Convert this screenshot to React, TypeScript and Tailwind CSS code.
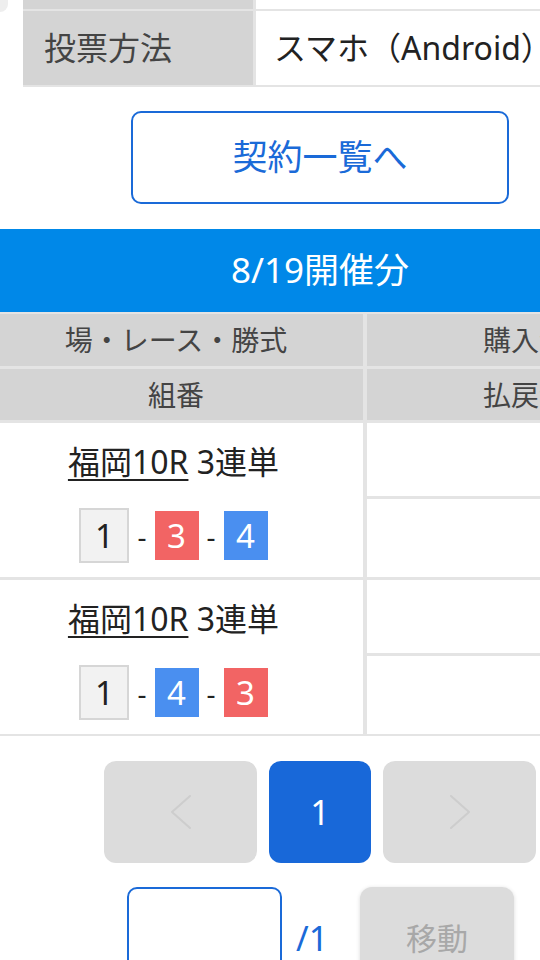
const FONT = { fontFamily: '"Noto Sans", "Noto Sans CJK JP", sans-serif' };

type Bet = { place: string; kind: string; nums: number[] };

const BETS: Bet[] = [
  { place: '福岡10R', kind: '3連単', nums: [1, 3, 4] },
  { place: '福岡10R', kind: '3連単', nums: [1, 4, 3] },
];

function Chevron({ dir }: { dir: 'left' | 'right' }) {
  const pts = dir === 'left' ? '20,1 2,17 20,33' : '2,1 20,17 2,33';
  return (
    <svg width="22" height="34" viewBox="0 0 22 34" fill="none">
      <polyline points={pts} stroke="#cdcdcd" strokeWidth="2" strokeLinecap="round" strokeLinejoin="round" />
    </svg>
  );
}

function NumBox({ n }: { n: number }) {
  if (n === 1) {
    return (
      <div className="w-[50px] h-[55px] border-2 border-[#d6d6d6] bg-[#f2f2f2] text-[#222] text-[33px] flex items-center justify-center">
        {n}
      </div>
    );
  }
  const bg = n === 3 ? 'bg-[#f26464]' : 'bg-[#4a8ff0]';
  return (
    <div className={`w-[44px] h-[49px] ${bg} text-white text-[33px] flex items-center justify-center`}>
      {n}
    </div>
  );
}

function BetRow({ bet }: { bet: Bet }) {
  return (
    <div className="flex gap-x-[4px] h-[154px]">
      <div className="w-[363px] bg-white flex flex-col items-center pr-[16px] pt-[19px] text-[#222]">
        <div className="text-[32px] leading-[40px]">
          <span className="underline decoration-2 underline-offset-[5px]">{bet.place}</span> {bet.kind}
        </div>
        <div className="mt-[26px] flex items-center">
          {bet.nums.map((n, i) => (
            <div key={i} className="flex items-center">
              {i > 0 && <span className="text-[28px] mx-[8px]">-</span>}
              <NumBox n={n} />
            </div>
          ))}
        </div>
      </div>
      <div className="w-[350px] flex flex-col gap-y-[3px]">
        <div className="h-[73px] bg-white" />
        <div className="flex-1 bg-white" />
      </div>
    </div>
  );
}

export default function App() {
  return (
    <div className="relative w-[540px] h-[960px] overflow-hidden bg-white" style={FONT}>
      <div className="absolute left-0 top-0 w-[8px] h-[12px] rounded-br-[8px] bg-[#eeeeee]" />
      <div className="w-[640px]">
        {/* summary table */}
        <div className="ml-[23px] w-[594px] bg-[#e4e4e4] flex flex-col gap-y-[2px] pb-[2px]">
          <div className="flex gap-x-[3px] h-[9px]">
            <div className="w-[230px] bg-[#d4d4d4]" />
            <div className="flex-1 bg-white" />
          </div>
          <div className="flex gap-x-[3px] h-[74px]">
            <div className="w-[230px] bg-[#d4d4d4] flex items-center pl-[21px] text-[32px] text-[#444]">投票方法</div>
            <div className="flex-1 bg-white flex items-center pl-[18px] text-[32px] text-[#222]">スマホ（Android）</div>
          </div>
        </div>

        <button className="mt-[24px] mx-auto flex items-center justify-center w-[378px] h-[93px] border-2 border-[#1a6ad8] rounded-[10px] text-[35px] text-[#1a6ad8]">
          契約一覧へ
        </button>

        <div className="mt-[25px] h-[83px] bg-[#0088e8] text-white text-[35px] flex items-center justify-center">
          8/19開催分
        </div>

        {/* bets table */}
        <div className="w-[717px] bg-[#e4e4e4] flex flex-col gap-y-[3px] pt-[2px] pb-[2px]">
          <div className="flex gap-x-[4px] h-[52px] text-[28px] text-[#444]">
            <div className="w-[363px] bg-[#d4d4d4] flex items-center justify-center pr-[11px]">場・レース・勝式</div>
            <div className="w-[350px] bg-[#d4d4d4] flex items-center justify-center pr-[6px]">購入金額</div>
          </div>
          <div className="flex gap-x-[4px] h-[51px] text-[28px] text-[#444]">
            <div className="w-[363px] bg-[#d4d4d4] flex items-center justify-center pr-[11px]">組番</div>
            <div className="w-[350px] bg-[#d4d4d4] flex items-center justify-center pr-[6px]">払戻金額</div>
          </div>
          {BETS.map((b, i) => (
            <BetRow key={i} bet={b} />
          ))}
        </div>

        {/* pagination */}
        <div className="mt-[25px] flex justify-center gap-x-[12px]">
          <div className="w-[153px] h-[102px] rounded-[12px] bg-[#dcdcdc] flex items-center justify-center">
            <Chevron dir="left" />
          </div>
          <div className="w-[102px] h-[102px] rounded-[12px] bg-[#1868d9] text-white text-[34px] flex items-center justify-center">
            1
          </div>
          <div className="w-[153px] h-[102px] rounded-[12px] bg-[#dcdcdc] flex items-center justify-center">
            <Chevron dir="right" />
          </div>
        </div>

        <div className="mt-[24px] flex items-center pl-[127px]">
          <input className="w-[155px] h-[100px] border-2 border-[#1a6ad8] rounded-[10px] bg-white outline-none" />
          <span className="ml-[14px] text-[34px] text-[#1a6ad8] pt-[2px]">/1</span>
          <button className="ml-[32px] w-[154px] h-[100px] rounded-[12px] bg-[#dcdcdc] text-[31px] text-[#a8a8a8] shadow-[0_1px_4px_rgba(0,0,0,0.15)] pt-[2px]">
            移動
          </button>
        </div>
      </div>
    </div>
  );
}
